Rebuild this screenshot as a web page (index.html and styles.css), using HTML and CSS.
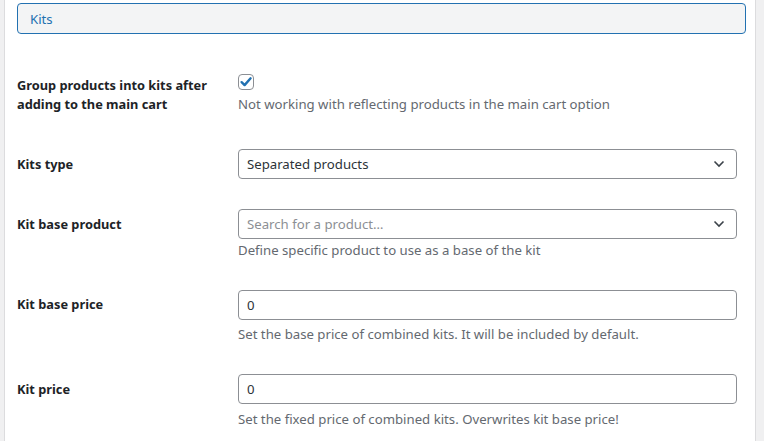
FILE: index.html
```html
<!DOCTYPE html>
<html lang="en">
<head>
<meta charset="utf-8">
<title>Kits settings</title>
<link rel="stylesheet" href="styles.css">
</head>
<body>
<div class="panel">
  <div class="section-tab">Kits</div>
  <div class="form">
    <div class="row row-check">
      <div class="label label-check">Group products into kits after adding to the main cart</div>
      <div class="field">
        <span class="checkbox">
          <svg viewBox="0 0 16 16" width="16" height="16"><path d="M3.6 8.2 L6.6 11.1 L12.6 4.3" fill="none" stroke="#2271b1" stroke-width="2.4" stroke-linecap="round" stroke-linejoin="round"/></svg>
        </span>
        <p class="desc desc-check">Not working with reflecting products in the main cart option</p>
      </div>
    </div>
    <div class="row">
      <div class="label">Kits type</div>
      <div class="field">
        <div class="control select">
          <span>Separated products</span>
          <svg class="chev" viewBox="0 0 12 8" width="12" height="8"><path d="M1.5 1.5 L6 6 L10.5 1.5" fill="none" stroke="#3c434a" stroke-width="1.6"/></svg>
        </div>
      </div>
    </div>
    <div class="row">
      <div class="label">Kit base product</div>
      <div class="field">
        <div class="control select">
          <span class="placeholder">Search for a product…</span>
          <svg class="chev" viewBox="0 0 12 8" width="12" height="8"><path d="M1.5 1.5 L6 6 L10.5 1.5" fill="none" stroke="#3c434a" stroke-width="1.6"/></svg>
        </div>
        <p class="desc desc-tight">Define specific product to use as a base of the kit</p>
      </div>
    </div>
    <div class="row">
      <div class="label">Kit base price</div>
      <div class="field">
        <div class="control">0</div>
        <p class="desc">Set the base price of combined kits. It will be included by default.</p>
      </div>
    </div>
    <div class="row">
      <div class="label">Kit price</div>
      <div class="field">
        <div class="control">0</div>
        <p class="desc">Set the fixed price of combined kits. Overwrites kit base price!</p>
      </div>
    </div>
  </div>
</div>
</body>
</html>
```
FILE: styles.css
```css
html, body {
  margin: 0;
  padding: 0;
  background: #f0f0f1;
  height: 100%;
  overflow: hidden;
}
body {
  font-family: "Noto Sans", "Open Sans", sans-serif;
  font-size: 13px;
  color: #1d2327;
}
.panel {
  margin-left: 4px;
  width: 752px;
  min-height: 441px;
  background: #fff;
  border-left: 1px solid #dcdcde;
  border-right: 1px solid #dcdcde;
  padding: 3px 0 0 12px;
  box-sizing: border-box;
}
.section-tab {
  width: 729px;
  height: 31px;
  box-sizing: border-box;
  border: 1px solid #2271b1;
  border-radius: 4px;
  background: #f3f4f5;
  color: #2271b1;
  padding: 0 12px;
  line-height: 30px;
  font-size: 13.2px;
}
.form {
  display: flex;
  flex-direction: column;
  gap: 30px;
  margin-top: 40px;
}
.row {
  display: flex;
}
.row-check {
  margin-bottom: 5.5px;
}
.label {
  width: 221px;
  flex: none;
  font-weight: 700;
  line-height: 19px;
  padding-top: 5.5px;
  box-sizing: border-box;
  padding-right: 20px;
  font-size: 12.8px;
}
.label-check {
  padding-top: 1.5px;
}
.field {
  width: 499px;
  display: flex;
  flex-direction: column;
  align-items: flex-start;
}
.checkbox {
  width: 16px;
  height: 16px;
  box-sizing: border-box;
  border: 1px solid #8c8f94;
  border-radius: 4px;
  display: flex;
  align-items: center;
  justify-content: center;
}
.checkbox svg {
  display: block;
  flex: none;
}
.desc {
  margin: 5.5px 0 0;
  line-height: 19px;
  color: #646970;
  font-size: 13.2px;
}
.desc-check {
  margin-top: 4.5px;
}
.desc-tight {
  margin-top: 1.5px;
}
.control {
  width: 499px;
  height: 30px;
  box-sizing: border-box;
  border: 1px solid #8c8f94;
  border-radius: 4px;
  padding: 0 8px;
  line-height: 28px;
  color: #2c3338;
  display: flex;
  align-items: center;
  justify-content: space-between;
  font-size: 13.2px;
}
.select .chev {
  margin-right: 3px;
}
.placeholder {
  color: #8c8f94;
}
```
